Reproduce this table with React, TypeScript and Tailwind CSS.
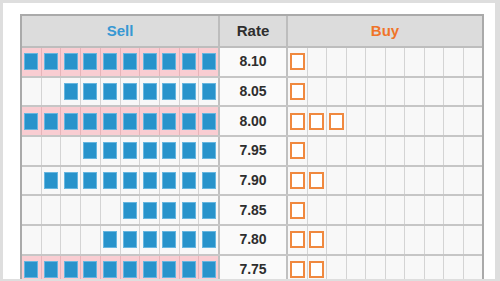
import React from 'react';

type Row = { rate: string; sell: number; buy: number };

const rows: Row[] = [
  { rate: '8.10', sell: 10, buy: 1 },
  { rate: '8.05', sell: 8, buy: 1 },
  { rate: '8.00', sell: 10, buy: 3 },
  { rate: '7.95', sell: 7, buy: 1 },
  { rate: '7.90', sell: 9, buy: 2 },
  { rate: '7.85', sell: 5, buy: 1 },
  { rate: '7.80', sell: 6, buy: 2 },
  { rate: '7.75', sell: 10, buy: 2 },
];

const slots = Array.from({ length: 10 }, (_, i) => i);

function BookRow({ row }: { row: Row }) {
  const full = row.sell === 10;
  return (
    <div className="flex h-[29.7px] border-b-2 border-[#c6c6c6]">
      <div className={`flex w-[196px] ${full ? 'bg-[#f9cdd2]' : 'bg-[#f8f8f8]'}`}>
        {slots.map((i) => (
          <div
            key={i}
            className={`flex flex-1 items-center justify-center border-r ${
              full ? 'border-[#e6b4b9]' : 'border-[#d4d4d4]'
            } last:border-r-0`}
          >
            {i >= 10 - row.sell && (
              <div className="h-[17px] w-[14px] border border-[#67b6df] bg-[#2893cb]" />
            )}
          </div>
        ))}
      </div>
      <div className="flex w-[70px] items-center justify-center border-x-2 border-[#c0c0c0] bg-[#fafafa] text-[14px] font-bold text-[#2e2e2e]">
        {row.rate}
      </div>
      <div className="flex flex-1 bg-[#f8f8f8]">
        {slots.map((i) => (
          <div
            key={i}
            className="flex flex-1 items-center justify-center border-r border-[#d4d4d4] last:border-r-0"
          >
            {i < row.buy && (
              <div className="h-[17px] w-[15px] border-2 border-[#f0893f] bg-white" />
            )}
          </div>
        ))}
      </div>
    </div>
  );
}

export default function App() {
  return (
    <div
      className="h-[281px] w-[500px] overflow-hidden bg-[#dedede] pl-[3px] pr-[5px] pt-[3px]"
      style={{ fontFamily: '"Liberation Sans", Arial, sans-serif' }}
    >
      <div className="h-[276px] overflow-hidden bg-white pl-[17px] pt-[11px]">
        <div className="w-[464px] border-2 border-b-0 border-[#aaaaaa]">
          <div className="flex h-[32px] border-b-2 border-[#bdbdbd] bg-[#dcdcdc] text-[15px] font-bold">
            <div className="flex w-[196px] items-center justify-center text-[#3798d3]">Sell</div>
            <div className="flex w-[70px] items-center justify-center border-x-2 border-[#bdbdbd] text-[#2e2e2e]">
              Rate
            </div>
            <div className="flex flex-1 items-center justify-center text-[#f07428]">Buy</div>
          </div>
          {rows.map((r) => (
            <BookRow key={r.rate} row={r} />
          ))}
        </div>
      </div>
    </div>
  );
}
